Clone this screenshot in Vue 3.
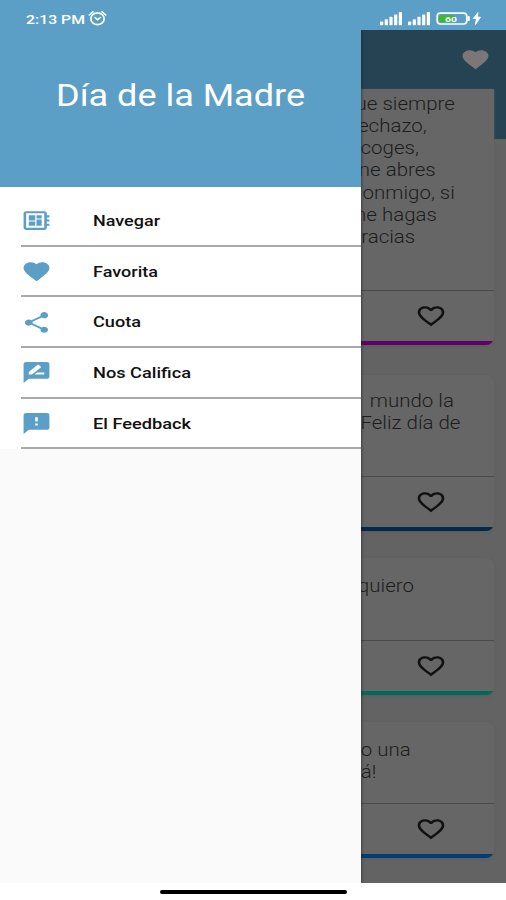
<script setup>
const heart = 'M12 21.35l-1.45-1.32C5.4 15.36 2 12.28 2 8.5 2 5.42 4.42 3 7.5 3c1.74 0 3.41.81 4.5 2.09C13.09 3.81 14.76 3 16.5 3 19.58 3 22 5.42 22 8.5c0 3.78-3.4 6.86-8.55 11.54L12 21.35z'
const heartOutline = 'M16.5 3c-1.74 0-3.41.81-4.5 2.09C10.91 3.81 9.24 3 7.5 3 4.42 3 2 5.42 2 8.5c0 3.78 3.4 6.86 8.55 11.54L12 21.35l1.45-1.32C18.6 15.36 22 12.28 22 8.5 22 5.42 19.58 3 16.5 3zm-4.4 15.55l-.1.1-.1-.1C7.14 14.24 4 11.39 4 8.5 4 6.5 5.5 5 7.5 5c1.54 0 3.04.99 3.57 2.36h1.87C13.46 5.99 14.96 5 16.5 5c2 0 3.5 1.5 3.5 3.5 0 2.89-3.14 5.74-7.9 10.05z'

const menu = [
  { label: 'Navegar', width: 67, icon: 'M22 9V7h-2V5c0-1.1-.9-2-2-2H4c-1.1 0-2 .9-2 2v14c0 1.1.9 2 2 2h14c1.1 0 2-.9 2-2v-2h2v-2h-2v-2h2v-2h-2V9h2zm-4 10H4V5h14v14zM6 13h5v4H6zm6-6h4v3h-4zM6 7h5v5H6zm6 4h4v6h-4z' },
  { label: 'Favorita', width: 65, icon: heart },
  { label: 'Cuota', width: 48, icon: 'M18 16.08c-.76 0-1.44.3-1.96.77L8.91 12.7c.05-.23.09-.46.09-.7s-.04-.47-.09-.7l7.05-4.11c.54.5 1.25.81 2.04.81 1.66 0 3-1.34 3-3s-1.34-3-3-3-3 1.34-3 3c0 .24.04.47.09.7L8.04 9.81C7.5 9.31 6.79 9 6 9c-1.66 0-3 1.34-3 3s1.34 3 3 3c.79 0 1.5-.31 2.04-.81l7.12 4.16c-.05.21-.08.43-.08.65 0 1.61 1.31 2.92 2.92 2.92s2.92-1.31 2.92-2.92-1.31-2.92-2.92-2.92z' },
  { label: 'Nos Califica', width: 98, icon: 'M20 2H4c-1.1 0-2 .9-2 2v18l4-4h14c1.1 0 2-.9 2-2V4c0-1.1-.9-2-2-2zM6 14v-2.470l6.880-6.880c.2-.2.510-.2.710 0l1.770 1.770c.2.2.2.510 0 .710L8.470 14H6zm12 0h-7.500l2-2H18v2z' },
  { label: 'El Feedback', width: 98, icon: 'M20 2H4c-1.1 0-1.99.9-1.99 2L2 22l4-4h14c1.1 0 2-.9 2-2V4c0-1.100-.9-2-2-2zm-7 12h-2v-2h2v2zm0-4h-2V6h2v4z' },
]

// "end" is the distance from a line's last letter to the card's right edge
const cards = [
  { name: 'first', lines: [
    { t: 'ue siempre', end: 39 }, { t: 'echazo,', end: 67 }, { t: 'coges,', end: 75 },
    { t: 'ne abres', end: 58 }, { t: 'onmigo, si', end: 39 }, { t: 'ne hagas', end: 57 }, { t: 'racias', end: 79 },
  ] },
  { name: 'second', lines: [{ t: 'mundo la', end: 40 }, { t: 'Feliz día de', end: 34 }] },
  { name: 'third', lines: [{ t: 'quiero', end: 80 }] },
  { name: 'fourth', lines: [{ t: 'o una', end: 83 }, { t: 'á!', end: 118 }] },
]
</script>

<template>
  <div class="screen">
    <header class="status">
      <svg class="clock" width="84" height="24" viewBox="0 0 84 24">
        <text x="0" y="17.500" textLength="59" lengthAdjust="spacingAndGlyphs">2:13 PM</text>
        <g fill="none" stroke="#fff" stroke-width="1.700" stroke-linecap="round">
          <ellipse cx="71.500" cy="12.800" rx="6.700" ry="5.900" />
          <path d="M69 11.500l2.500 2.200 3-2.200M63.200 9l4-3.300M79.800 9l-4-3.300" stroke-width="1.500" />
        </g>
      </svg>
      <svg class="signals" width="104" height="24" viewBox="0 0 104 24">
        <g fill="#fff">
          <template v-for="o in [0, 28]" :key="o">
            <rect v-for="i in 5" :key="i" :x="o + (i - 1) * 4.700" :y="19 - i * 2.400" width="3.200" :height="1.200 + i * 2.400" rx=".7" />
          </template>
          <rect x="87.500" y="11" width="2.300" height="5" rx="1" />
          <path d="M98 7.500l-4.800 6h3.300l-1 6 5-7.300h-3.200z" stroke="#fff" stroke-width=".9" />
        </g>
        <rect x="57.200" y="8.200" width="29.600" height="10.800" rx="3.200" fill="none" stroke="#fff" stroke-width="1.700" />
        <path d="M59 10.300h15v6.800H59z" fill="#3dbb25" />
        <text class="charge" x="65" y="16.800" textLength="12" lengthAdjust="spacingAndGlyphs">60</text>
      </svg>
    </header>

    <div class="body">
      <aside class="drawer">
        <div class="hero">
          <svg width="250" height="40" viewBox="0 0 250 40">
            <text x="-1" y="31.500" textLength="249" lengthAdjust="spacingAndGlyphs">Día de la Madre</text>
          </svg>
        </div>
        <nav>
          <a v-for="m in menu" :key="m.label" class="item">
            <svg class="icon" width="31" height="25" viewBox="0 0 24 24" preserveAspectRatio="none"><path :d="m.icon" /></svg>
            <svg class="label" width="110" height="24" viewBox="0 0 110 24">
              <text x="0" y="17" :textLength="m.width" lengthAdjust="spacingAndGlyphs">{{ m.label }}</text>
            </svg>
          </a>
        </nav>
      </aside>

      <main class="feed">
        <div class="appbar">
          <svg width="31" height="25" viewBox="0 0 24 24" preserveAspectRatio="none"><path :d="heart" /></svg>
        </div>
        <div class="list">
          <article v-for="c in cards" :key="c.name" class="card" :class="c.name">
            <div class="copy">
              <p v-for="l in c.lines" :key="l.t" :style="{ paddingRight: l.end + 'px' }"><span>{{ l.t }}</span></p>
            </div>
            <div class="actions">
              <svg width="32" height="26" viewBox="0 0 24 24" preserveAspectRatio="none"><path :d="heartOutline" /></svg>
            </div>
          </article>
        </div>
      </main>
    </div>

    <footer class="gesture"><i></i></footer>
  </div>
</template>

<style>
body { margin: 0; background: #fff; }
</style>

<style scoped>
.screen { width: 506px; height: 900px; display: flex; flex-direction: column; overflow: hidden; background: #fff; font-family: Roboto, "Liberation Sans", sans-serif; }
.screen svg { display: block; flex: none; overflow: visible; }
.status { height: 30px; flex: none; box-sizing: border-box; display: flex; justify-content: space-between; padding: 6px 22px 0 26px; background: #5c9fc6; }
.clock text { font-size: 13.500px; font-weight: 500; fill: #fff; }
.signals { margin-top: -1px; }
.signals .charge { font-size: 8px; font-weight: 700; fill: #fff; }
.body { display: flex; height: 853px; flex: none; }
.drawer { width: 361px; flex: none; background: #fafafa; box-shadow: 0 0 3px #222; clip-path: inset(0 -4px 0 0); z-index: 1; }
.hero { height: 157px; box-sizing: border-box; padding: 44px 0 0 57px; background: #5c9fc6; }
.hero text { font-size: 30.500px; fill: #fff; }
nav { background: #fff; padding: 9px 0 0 21px; }
.item { height: 50.700px; box-sizing: border-box; border-bottom: 2px solid #a9a9a9; display: flex; align-items: center; padding-top: 1px; }
.icon { fill: #5c9fc6; }
.label { margin-left: 41px; }
.label text { font-size: 14.500px; font-weight: 500; fill: #111; }
.feed { width: 145px; overflow: hidden; background: #636363; display: flex; flex-direction: column; }
.appbar { height: 59px; flex: none; box-sizing: border-box; display: flex; justify-content: flex-end; padding: 17px 15px 0 0; background: #264353; }
.appbar svg { fill: #7c7777; }
.list { flex: 1; background: linear-gradient(#264353 50px, #636363 50px); padding-right: 12px; }
.card { box-sizing: border-box; display: flex; flex-direction: column; background: linear-gradient(var(--accent), var(--accent)) bottom / 100% 4px no-repeat #666; padding-bottom: 4px; border-radius: 0 8px 8px 0; box-shadow: 0 1px 3px #5b5b5b; }
.first { height: 256px; --accent: #620064; border-top-right-radius: 0; }
.second { height: 156px; margin-top: 30px; --accent: #062849; }
.third { height: 137px; margin-top: 27px; --accent: #006a58; }
.fourth { height: 136px; margin-top: 27px; --accent: #003d78; }
.copy { flex: 1; padding-top: 14.500px; }
.first .copy { padding-top: 3.500px; }
.third .copy { padding-top: 17px; }
.fourth .copy { padding-top: 17px; }
.copy p { margin: 0; height: 22.300px; line-height: 22.300px; display: flex; justify-content: flex-end; white-space: nowrap; font-size: 17.500px; font-weight: 300; color: #1c1c1c; }
.copy span { transform: scaleX(1.17); transform-origin: right; }
.actions { height: 50px; flex: none; border-top: 1.500px solid #4a4a4a; display: flex; align-items: center; justify-content: flex-end; padding-right: 47px; }
.actions svg { fill: #111; }
.gesture { height: 17px; flex: none; display: flex; justify-content: center; }
.gesture i { width: 187px; height: 4px; margin-top: 6.500px; border-radius: 3px; background: #000; }
</style>
